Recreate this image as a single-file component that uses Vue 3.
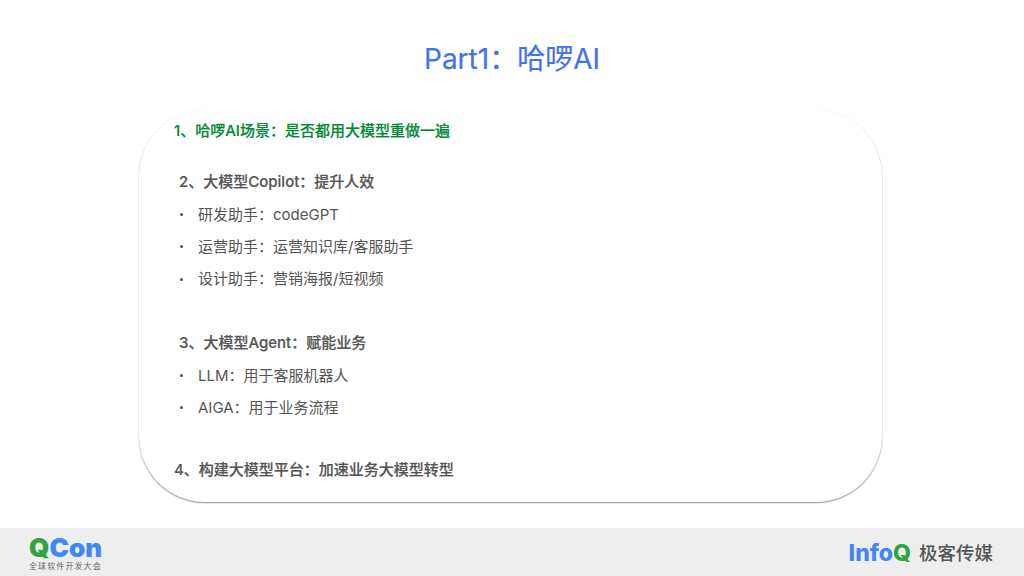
<script setup>
const c = '\uFF1A'
const title = `Part1${c}哈啰AI`
const groups = [
  { cls: 'first', head: `1、哈啰AI场景${c}是否都用大模型重做一遍`, items: [] },
  { cls: 'second', head: `2、大模型Copilot${c}提升人效`, items: [`研发助手${c}codeGPT`, `运营助手${c}运营知识库/客服助手`, `设计助手${c}营销海报/短视频`] },
  { cls: 'third', head: `3、大模型Agent${c}赋能业务`, items: [`LLM${c}用于客服机器人`, `AIGA${c}用于业务流程`] },
  { cls: 'fourth', head: `4、构建大模型平台${c}加速业务大模型转型`, items: [] }
]
</script>

<template>
  <div class="page">
    <h1 class="title">{{ title }}</h1>
    <section class="card">
      <div v-for="g in groups" :key="g.head" class="group" :class="g.cls">
        <div class="head">{{ g.head }}</div>
        <div v-for="it in g.items" :key="it" class="item">
          <span class="dot"></span>
          <span>{{ it }}</span>
        </div>
      </div>
    </section>
    <footer class="footer">
      <div class="qcon">
        <div class="qcon-word"><span class="green">Q</span><span class="blue">Con</span></div>
        <div class="qcon-sub">全球软件开发大会</div>
      </div>
      <div class="infoq">
        <div class="infoq-word"><span class="blue">Info</span><span class="green">Q</span></div>
        <div class="infoq-cn">极客传媒</div>
      </div>
    </footer>
  </div>
</template>

<style>
html, body { margin: 0; background: #fff; }
</style>

<style scoped>
.page {
  width: 1024px;
  height: 576px;
  overflow: hidden;
  display: flex;
  flex-direction: column;
  background: #fff;
  font-family: Inter, "Noto Sans CJK SC", sans-serif;
}
.title {
  margin: 0;
  height: 110px;
  box-sizing: border-box;
  padding-top: 40px;
  text-align: center;
  font-size: 28px;
  line-height: 38px;
  font-weight: 400;
  color: #4472e8;
  -webkit-text-stroke: 0.2px currentColor;
}
.card {
  width: 743px;
  height: 392px;
  margin-left: 139px;
  box-sizing: border-box;
  border-radius: 66px;
  box-shadow: 0 1px 1.5px rgba(0, 0, 0, 0.45);
  background: #fff;
  padding-top: 5px;
  color: #555;
}
.group { line-height: 32.25px; font-size: 15px; }
.head { font-weight: 500; -webkit-text-stroke: 0.2px currentColor; }
.first { color: #008a36; padding-left: 35px; }
.second { margin-top: 19px; padding-left: 40px; }
.third { margin-top: 32px; padding-left: 40px; }
.fourth { margin-top: 30px; padding-left: 35px; }
.item {
  display: flex;
  align-items: center;
  font-weight: 400;
}
.dot {
  width: 3px;
  height: 3px;
  border-radius: 50%;
  background: #555;
  margin-left: 1px;
  margin-right: 15px;
}
.footer {
  margin-top: 26px;
  height: 48px;
  flex: none;
  background: #eee;
  display: flex;
  justify-content: space-between;
  box-sizing: border-box;
  padding: 0 31px 0 29px;
}
.green { color: #2fa53c; }
.blue { color: #4287f5; }
.qcon { width: 74px; padding-top: 7px; }
.qcon-word {
  font-size: 26px;
  line-height: 26px;
  font-weight: 900;
  white-space: nowrap;
}
.qcon-sub {
  font-size: 8px;
  line-height: 10px;
  letter-spacing: 1.1px;
  color: #666;
  white-space: nowrap;
}
.infoq { display: flex; align-items: center; gap: 8px; padding-top: 1px; }
.infoq-word {
  font-size: 23px;
  font-weight: 800;
  line-height: 28px;
}
.infoq-cn { font-size: 18.5px; line-height: 28px; color: #555; font-weight: 500; }
</style>
